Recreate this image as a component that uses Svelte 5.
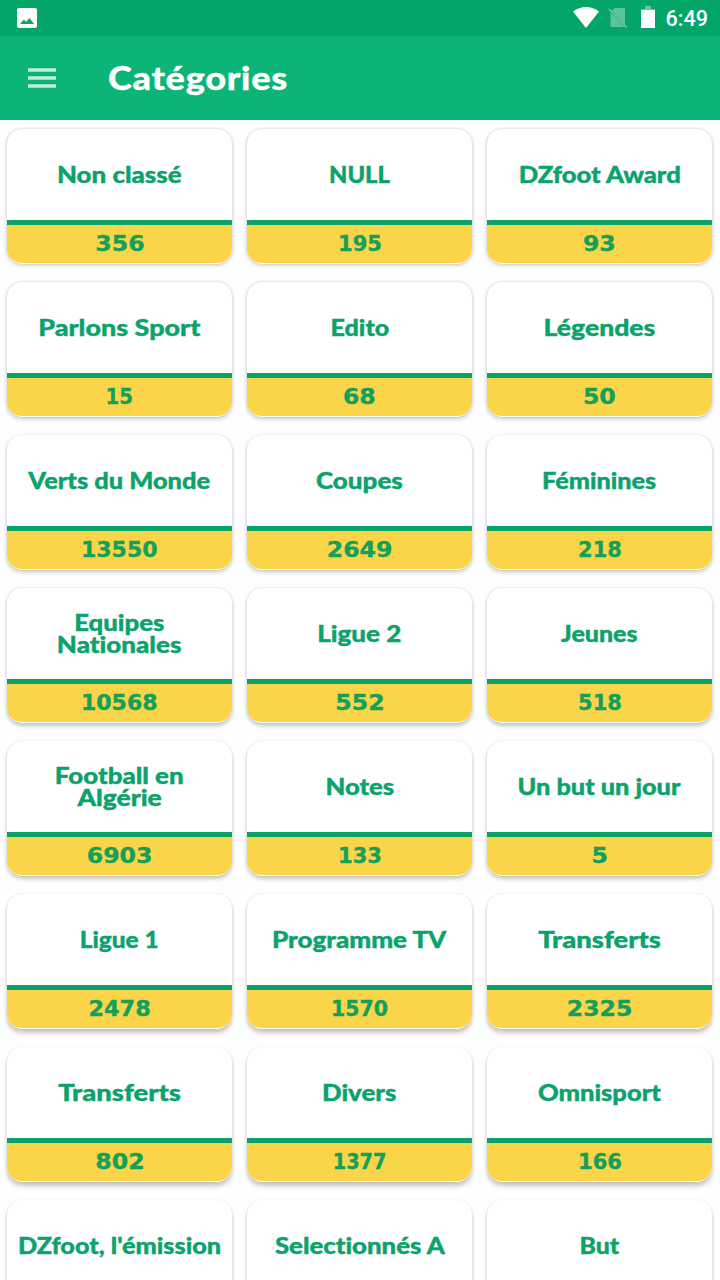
<script lang="ts">
	type Line = { text: string; stretch: number };
	type Category = { lines: Line[]; count?: number };

	const single = (text: string, stretch: number, count?: number): Category => ({
		lines: [{ text, stretch }],
		count
	});

	const categories: Category[] = [
		single('Non classé', 1.127, 356),
		single('NULL', 1.03, 195),
		single('DZfoot Award', 1.115, 93),
		single('Parlons Sport', 1.17, 15),
		single('Edito', 1.09, 68),
		single('Légendes', 1.155, 50),
		single('Verts du Monde', 1.105, 13550),
		single('Coupes', 1.13, 2649),
		single('Féminines', 1.095, 218),
		{
			lines: [
				{ text: 'Equipes', stretch: 1.12 },
				{ text: 'Nationales', stretch: 1.13 }
			],
			count: 10568
		},
		single('Ligue 2', 1.13, 552),
		single('Jeunes', 1.085, 518),
		{
			lines: [
				{ text: 'Football en', stretch: 1.125 },
				{ text: 'Algérie', stretch: 1.15 }
			],
			count: 6903
		},
		single('Notes', 1.115, 133),
		single('Un but un jour', 1.1, 5),
		single('Ligue 1', 1.06, 2478),
		single('Programme TV', 1.13, 1570),
		single('Transferts', 1.19, 2325),
		single('Transferts', 1.19, 802),
		single('Divers', 1.12, 1377),
		single('Omnisport', 1.11, 166),
		single("DZfoot, l'émission", 1.097),
		single('Selectionnés A', 1.12),
		single('But', 1.08)
	];

	const digitWidth = (digit: string) => (digit === '1' ? 11 : digit === '7' ? 13.2 : 16.4);

	const countStretch = (count: number) => {
		const digits = String(count).split('');
		return digits.reduce((sum, digit) => sum + digitWidth(digit), 0) / (digits.length * 15.3);
	};

	// elevation shadows drop further the lower a card sits on the screen
	const shadowOffset = (index: number) => 1 + Math.floor(index / 3) * 0.5;
</script>

<div class="screen">
	<div class="status">
		<svg class="status__picture" width="20" height="20" viewBox="0 0 20 20">
			<rect width="20" height="20" rx="2" fill="#fff" />
			<path d="M3 16 7 11.5 9 14 12.5 10 17 16Z" fill="#04a568" />
		</svg>
		<svg class="status__wifi" width="26" height="21" viewBox="0 0 26 21">
			<path d="M0 4.5C7.5-1.5 18.5-1.5 26 4.5L13 21Z" fill="#fff" />
		</svg>
		<svg class="status__sim" width="20" height="22" viewBox="0 0 20 22">
			<path d="M6.5 1H17V17.2L4 3.6ZM2.5 5.2 16.8 20H2.5Z" fill="#fff" opacity="0.35" />
			<path d="M.8 1.8 18.8 20.6" stroke="#fff" stroke-width="1.5" opacity="0.4" />
		</svg>
		<svg class="status__battery" width="14" height="22" viewBox="0 0 14 22">
			<path d="M4 0h6v3h4v2H0V3h4Z" fill="#fff" opacity="0.4" />
			<path d="M0 4h14v18H0Z" fill="#fff" />
		</svg>
		<span class="status__time">6:49</span>
	</div>

	<header class="toolbar">
		<svg class="toolbar__menu" width="28" height="20" viewBox="0 0 28 20">
			<path d="M0 2h28M0 10h28M0 18h28" stroke="#fff" stroke-width="3.4" opacity="0.75" />
		</svg>
		<h1 class="toolbar__title">Catégories</h1>
	</header>

	<main class="grid">
		{#each categories as category, index}
			<div class="card" style="--drop: {shadowOffset(index)}px">
				<div class="card__name">
					{#each category.lines as line}
						<span style="transform: scaleX({line.stretch})">{line.text}</span>
					{/each}
				</div>
				<div class="card__count">
					{#if category.count}
						<span style="transform: scaleX({countStretch(category.count)})">{category.count}</span>
					{/if}
				</div>
			</div>
		{/each}
	</main>
</div>

<style>
	:global(body) {
		margin: 0;
		background-color: #fff;
	}

	.screen {
		width: 720px;
		height: 1280px;
		overflow: hidden;
		background-color: #fefefe;
	}

	.status {
		display: flex;
		align-items: center;
		box-sizing: border-box;
		height: 36px;
		padding: 0 12px 0 17px;
		background-color: #04a568;
	}

	.status__wifi {
		margin: -1px 0 0 auto;
	}

	.status__sim {
		margin-left: 9px;
	}

	.status__battery {
		margin: -2px 0 0 13px;
	}

	.status__time {
		margin-left: 10px;
		padding-top: 2px;
		color: #fff;
		font: 500 21.6px/36px Roboto, sans-serif;
	}

	.toolbar {
		display: flex;
		align-items: center;
		box-sizing: border-box;
		height: 84px;
		padding-left: 28px;
		background-color: #0cb577;
	}

	.toolbar__menu {
		margin-top: -1px;
	}

	.toolbar__title {
		margin: 0 0 0 52px;
		color: #fff;
		font: 900 32px/84px Lato, sans-serif;
		letter-spacing: 0.6px;
		transform: scaleX(1.13);
		transform-origin: left;
		-webkit-text-stroke: 0.3px;
	}

	.grid {
		display: grid;
		grid-template-columns: repeat(3, 225px);
		grid-auto-rows: 135px;
		gap: 18px 15px;
		padding: 9px 7px;
	}

	.card {
		display: flex;
		flex-direction: column;
		box-sizing: border-box;
		overflow: hidden;
		border-bottom: 1px solid #fff;
		border-radius: 15px;
		background-color: #fff;
		box-shadow:
			0 var(--drop) 4px rgba(0, 0, 0, 0.22),
			0 0 2px rgba(0, 0, 0, 0.1);
	}

	.card__name {
		display: flex;
		flex-direction: column;
		align-items: center;
		justify-content: center;
		box-sizing: border-box;
		height: 91px;
		padding-bottom: 2px;
		color: #0ca26b;
		font: 900 23px/22px Lato, sans-serif;
		font-variant-ligatures: none;
		white-space: nowrap;
		-webkit-text-stroke: 0.4px;
	}

	.card__count {
		height: 38px;
		border-top: 5px solid #0ba266;
		background-color: #fad549;
		color: #14a05b;
		font: bold 22px/37px 'DejaVu Sans', sans-serif;
		text-align: center;
		-webkit-text-stroke: 0.4px;
	}

	.card__count span {
		display: inline-block;
	}
</style>
